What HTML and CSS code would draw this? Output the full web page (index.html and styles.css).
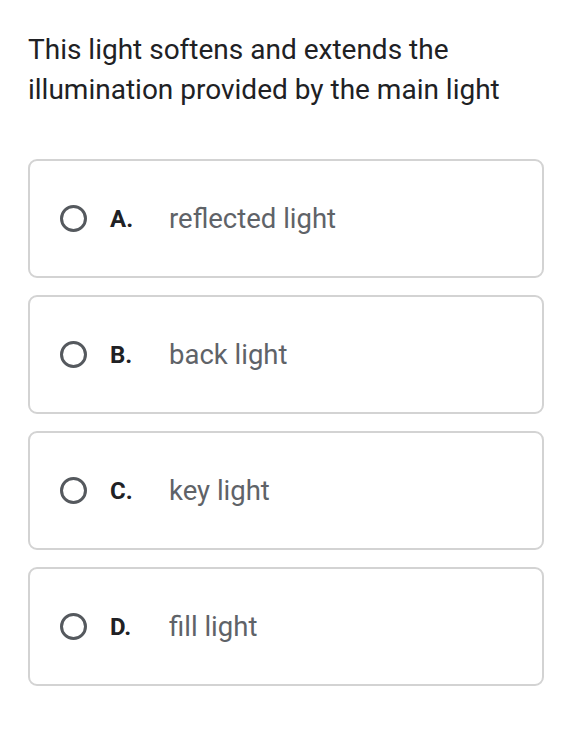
FILE: index.html
```html
<!DOCTYPE html>
<html>
<head>
<meta charset="utf-8">
<link rel="stylesheet" href="styles.css">
</head>
<body>
<div class="quiz">
  <p class="question">This light softens and extends the illumination provided by the main light</p>
  <div class="options">
    <div class="option"><span class="radio"></span><span class="letter">A.</span><span class="text">reflected light</span></div>
    <div class="option"><span class="radio"></span><span class="letter">B.</span><span class="text">back light</span></div>
    <div class="option"><span class="radio"></span><span class="letter">C.</span><span class="text">key light</span></div>
    <div class="option"><span class="radio"></span><span class="letter">D.</span><span class="text">fill light</span></div>
  </div>
</div>
</body>
</html>
```
FILE: styles.css
```css
html, body {
  margin: 0;
  padding: 0;
  background: #ffffff;
}
.quiz {
  padding: 30px 32px 0 28px;
  font-family: Roboto, "Liberation Sans", sans-serif;
}
.question {
  margin: 0;
  font-size: 28px;
  line-height: 40px;
  color: #202124;
  max-width: 480px;
}
.options {
  margin-top: 49px;
  display: flex;
  flex-direction: column;
  gap: 17px;
}
.option {
  height: 119px;
  box-sizing: border-box;
  border: 2px solid #d3d3d3;
  border-radius: 9px;
  display: flex;
  align-items: center;
  padding-left: 30px;
}
.radio {
  width: 27px;
  height: 27px;
  box-sizing: border-box;
  border: 3px solid #55595e;
  border-radius: 50%;
  flex: none;
}
.letter {
  margin-left: 23px;
  width: 59px;
  font-weight: bold;
  font-size: 24px;
  color: #202124;
}
.text {
  font-size: 27.5px;
  color: #5f6368;
}
```
